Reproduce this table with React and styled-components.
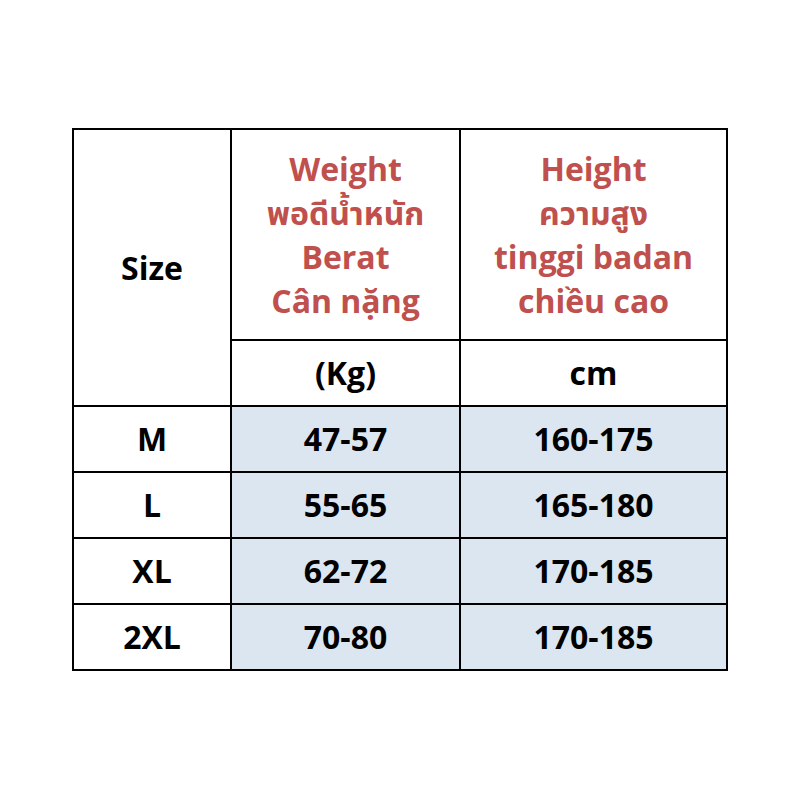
import React from "react";
import styled, { createGlobalStyle } from "styled-components";

const Global = createGlobalStyle`
  html, body { margin: 0; padding: 0; background: #fff; }
  body { font-family: "Open Sans", "Noto Sans", "Noto Sans Thai", "DejaVu Sans", sans-serif; }
`;

const Page = styled.div`
  width: 800px;
  height: 800px;
  box-sizing: border-box;
  padding: 128px 0 0 72px;
`;

const Table = styled.table`
  border-collapse: collapse;
  table-layout: fixed;
  width: 654px;
`;

const Row = styled.tr`
  height: ${(p) => p.$h}px;
`;

const Cell = styled.td`
  border: 2px solid #000;
  padding: 0;
  text-align: center;
  vertical-align: middle;
  font-weight: 700;
  font-size: 32px;
  line-height: 44px;
  color: ${(p) => (p.$red ? "#c0504d" : "#000")};
  background: ${(p) => (p.$fill ? "#dce6f1" : "#fff")};
`;

const Line = styled.div`
  white-space: nowrap;
`;

const rows = [
  ["M", "47-57", "160-175"],
  ["L", "55-65", "165-180"],
  ["XL", "62-72", "170-185"],
  ["2XL", "70-80", "170-185"],
];

export default function App() {
  return (
    <Page>
      <Global />
      <Table>
        <colgroup>
          <col style={{ width: 158 }} />
          <col style={{ width: 229 }} />
          <col style={{ width: 267 }} />
        </colgroup>
        <tbody>
          <Row $h={211}>
            <Cell rowSpan={2}>Size</Cell>
            <Cell $red>
              <Line>Weight</Line>
              <Line>พอดีน้ำหนัก</Line>
              <Line>Berat</Line>
              <Line>Cân nặng</Line>
            </Cell>
            <Cell $red>
              <Line>Height</Line>
              <Line>ความสูง</Line>
              <Line>tinggi badan</Line>
              <Line>chiều cao</Line>
            </Cell>
          </Row>
          <Row $h={66}>
            <Cell>(Kg)</Cell>
            <Cell>cm</Cell>
          </Row>
          {rows.map((r) => (
            <Row key={r[0]} $h={66}>
              <Cell>{r[0]}</Cell>
              <Cell $fill>{r[1]}</Cell>
              <Cell $fill>{r[2]}</Cell>
            </Row>
          ))}
        </tbody>
      </Table>
    </Page>
  );
}
